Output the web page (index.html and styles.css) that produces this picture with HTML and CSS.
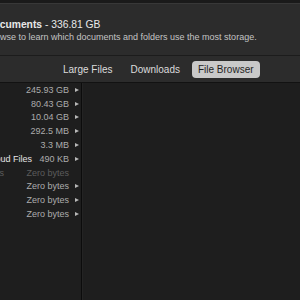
FILE: index.html
```html
<!DOCTYPE html>
<html>
  <head>
    <title>Documents</title>
    <link rel="stylesheet" href="styles.css">
  </head>
  <body>
    <div class="window">
      <!-- header -->
      <div class="header">
        <div class="title"><strong>Documents</strong> - 336.81 GB</div>
        <div class="desc">Browse to learn which documents and folders use the most storage.</div>
      </div>

      <!-- tabs -->
      <div class="tabs">
        <span class="tab">Large Files</span>
        <span class="tab">Downloads</span>
        <span class="tab active">File Browser</span>
      </div>

      <!-- browser columns -->
      <div class="browser">
        <div class="column">
          <div class="list">
            <div class="row"><span class="name"></span><span class="size">245.93 GB</span><span class="arrow"></span></div>
            <div class="row"><span class="name"></span><span class="size">80.43 GB</span><span class="arrow"></span></div>
            <div class="row"><span class="name"></span><span class="size">10.04 GB</span><span class="arrow"></span></div>
            <div class="row"><span class="name"></span><span class="size">292.5 MB</span><span class="arrow"></span></div>
            <div class="row"><span class="name"></span><span class="size">3.3 MB</span><span class="arrow"></span></div>
            <div class="row"><span class="name bright">iCloud Files</span><span class="size">490 KB</span><span class="arrow"></span></div>
            <div class="row dim"><span class="name">docs</span><span class="size">Zero bytes</span><span class="arrow none"></span></div>
            <div class="row"><span class="name"></span><span class="size">Zero bytes</span><span class="arrow"></span></div>
            <div class="row"><span class="name"></span><span class="size">Zero bytes</span><span class="arrow"></span></div>
            <div class="row"><span class="name"></span><span class="size">Zero bytes</span><span class="arrow"></span></div>
          </div>
        </div>
        <div class="column wide"></div>
      </div>
    </div>
  </body>
</html>
```

FILE: styles.css
```css
html, body {
  margin: 0;
  height: 100%;
  background: #1e1e1e;
}
.window {
  height: 300px;
  display: flex;
  flex-direction: column;
  font-family: "Liberation Sans", Arial, sans-serif;
  overflow: hidden;
}
.header {
  background: #2c2c2c;
  border-top: 3px solid #1a1a1a;
  box-shadow: inset 0 1px 0 #383838;
  border-bottom: 1px solid #1c1c1c;
  padding-top: 16px;
  box-sizing: border-box;
  height: 56px;
  white-space: nowrap;
}
.title {
  color: #e8e8e8;
  font-size: 10.3px;
  line-height: 12px;
  margin-left: -14px;
}
.title strong {
  font-weight: 700;
}
.desc {
  color: #c4c4c4;
  font-size: 9px;
  line-height: 12px;
  margin-left: -14px;
}
.tabs {
  background: #2c2c2c;
  height: 26px;
  border-bottom: 1px solid #121212;
  display: flex;
  align-items: center;
  gap: 6px;
  padding-left: 57px;
  white-space: nowrap;
}
.tab {
  color: #dcdcdc;
  font-size: 10px;
  line-height: 17px;
  padding: 0 6px;
  border-radius: 4px;
}
.tab.active {
  background: #c9c9c9;
  color: #1f1f1f;
}
.browser {
  flex: 1;
  display: flex;
}
.column {
  width: 81px;
  border-right: 1px solid #0c0c0c;
  box-shadow: 1px 0 0 #242424;
  overflow: hidden;
}
.column.wide {
  flex: 1;
  width: auto;
  border-right: none;
  box-shadow: none;
}
.list {
  margin-left: -15px;
}
.row {
  height: 13.8px;
  display: flex;
  align-items: center;
  font-size: 9px;
  color: #acacac;
  white-space: nowrap;
}
.name {
  flex: 1;
  overflow: hidden;
}
.name.bright {
  color: #e4e4e4;
}
.row.dim {
  color: #5c5c5c;
}
.size {
  text-align: right;
}
.arrow {
  width: 0;
  height: 0;
  margin-left: 6px;
  margin-right: 2px;
  border-left: 4px solid #b8b8b8;
  border-top: 2.5px solid transparent;
  border-bottom: 2.5px solid transparent;
}
.arrow.none {
  border-left-color: transparent;
}
```
